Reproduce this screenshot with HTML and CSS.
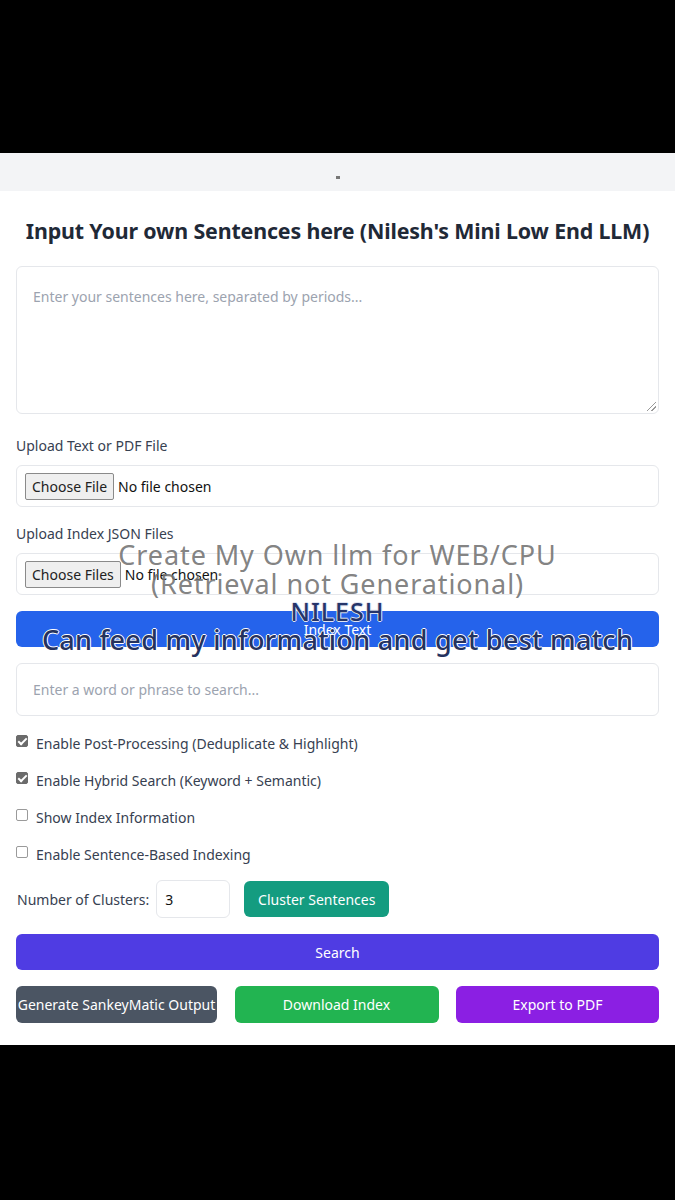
FILE: index.html
```html
<!DOCTYPE html>
<html>
<head>
<meta charset="utf-8">
<link rel="stylesheet" href="styles.css">
</head>
<body>
<div class="screen">
  <div class="topbar"><span class="dot"></span></div>
  <main class="page">
    <h1 class="title">Input Your own Sentences here (Nilesh's Mini Low End LLM)</h1>
    <div class="textarea"><span class="ph">Enter your sentences here, separated by periods...</span><span class="grip"></span></div>

    <label class="label">Upload Text or PDF File</label>
    <div class="filebox"><span class="filebtn">Choose File</span><span class="filetxt">No file chosen</span></div>

    <label class="label">Upload Index JSON Files</label>
    <div class="filebox"><span class="filebtn">Choose Files</span><span class="filetxt">No file chosen</span></div>

    <button class="btn full blue">Index Text</button>

    <div class="input search"><span class="ph">Enter a word or phrase to search...</span></div>

    <div class="checks">
      <label class="check"><span class="box on"></span>Enable Post-Processing (Deduplicate &amp; Highlight)</label>
      <label class="check"><span class="box on"></span>Enable Hybrid Search (Keyword + Semantic)</label>
      <label class="check"><span class="box"></span>Show Index Information</label>
      <label class="check"><span class="box"></span>Enable Sentence-Based Indexing</label>
    </div>

    <div class="clusters">
      <span class="clabel">Number of Clusters:</span>
      <span class="num">3</span>
      <button class="btn teal">Cluster Sentences</button>
    </div>

    <button class="btn full indigo">Search</button>

    <div class="actions">
      <button class="btn gray">Generate SankeyMatic Output</button>
      <button class="btn green">Download Index</button>
      <button class="btn purple">Export to PDF</button>
    </div>
  </main>

  <div class="captions">
    <div class="cap c1">Create My Own llm for WEB/CPU</div>
    <div class="cap c2">(Retrieval not Generational)</div>
    <div class="cap c3">NILESH</div>
    <div class="cap c4">Can feed my information and get best match</div>
  </div>
</div>
</body>
</html>
```

FILE: styles.css
```css
* { box-sizing: border-box; }
html, body { margin: 0; padding: 0; background: #000; }
body { font-family: "Noto Sans", "Open Sans", sans-serif; color: #1f2937; }

.screen { position: relative; width: 675px; height: 1200px; padding-top: 153px; background: #000; }

.topbar { height: 38px; background: #f3f4f6; display: flex; justify-content: center; align-items: center; }
.dot { width: 4px; height: 3px; background: #777; margin-top: 10px; }

.page { background: #fff; height: 854px; padding: 26px 16px 0 16px; display: flex; flex-direction: column; }

.title { margin: 0; text-align: center; font-size: 21.4px; font-weight: 700; line-height: 28px; color: #1f2937; letter-spacing: -0.15px; white-space: nowrap; }

.textarea { position: relative; margin-top: 21px; height: 148px; border: 1px solid #e5e7eb; border-radius: 6px; padding: 18px 16px; }
.ph { font-size: 14px; color: #9ca3af; line-height: 20px; }
.grip { position: absolute; right: 2px; bottom: 2px; width: 9px; height: 9px;
  background: linear-gradient(135deg, transparent 45%, #999 45%, #999 55%, transparent 55%, transparent 70%, #999 70%, #999 80%, transparent 80%); }

.label { display: block; margin-top: 22px; font-size: 14px; line-height: 20px; color: #374151; }
.label + .filebox { margin-top: 9px; }
.filebox + .label { margin-top: 17px; }

.filebox { height: 42px; border: 1px solid #e5e7eb; border-radius: 6px; display: flex; align-items: center; padding-left: 8px; font-size: 14px; color: #111; }
.filebtn { display: inline-flex; align-items: center; height: 27px; padding: 0 6px; border: 1px solid #8a8a8a; border-radius: 2px; background: #efefef; color: #222; margin-right: 4px; }
.filetxt { color: #111; }

.btn { border: 0; border-radius: 6px; color: #fff; font-family: inherit; font-size: 14px; display: flex; align-items: center; justify-content: center; padding: 0; }
.full { width: 100%; height: 36px; margin-top: 16px; }
.blue { background: #2563eb; }
.indigo { background: #4f3ce3; }

.input.search { margin-top: 16px; height: 53px; border: 1px solid #e5e7eb; border-radius: 6px; padding: 0 16px; display: flex; align-items: center; }

.checks { margin-top: 17px; display: flex; flex-direction: column; gap: 17px; }
.check { display: flex; align-items: center; height: 20px; font-size: 14px; color: #374151; }
.box { width: 12px; height: 12px; border: 1px solid #9a9a9a; border-radius: 2px; margin-right: 8px; margin-top: -4px; background: #fff; position: relative; }
.box.on { background: #6b6b6b; border-color: #6b6b6b; }
.box.on::after { content: ""; position: absolute; left: 3px; top: 0px; width: 3px; height: 7px; border: solid #fff; border-width: 0 2px 2px 0; transform: rotate(45deg); }

.clusters { margin-top: 16px; display: flex; align-items: center; height: 38px; }
.clabel { font-size: 14px; color: #374151; margin-left: 1px; margin-right: 7px; }
.num { width: 74px; height: 38px; border: 1px solid #e5e7eb; border-radius: 6px; display: flex; align-items: center; padding-left: 8px; font-size: 14px; color: #111; }
.teal { background: #149c80; height: 36px; width: 145px; margin-left: 14px; }

.actions { margin-top: 16px; display: grid; grid-template-columns: 201px 204px 203px; justify-content: space-between; }
.actions .btn { height: 37px; }
.gray { background: #4b5563; }
.green { background: #22b451; }
.purple { background: #8b1fe3; }

.captions { position: absolute; left: 0; top: 540px; width: 675px; text-align: center; pointer-events: none; }
.cap { font-family: "Noto Sans", sans-serif; line-height: 29px; white-space: nowrap; }
.c1, .c2 { font-size: 27px; color: rgba(115,115,115,0.9); letter-spacing: 0.9px; }
.c3 { font-size: 25px; color: #26356a; letter-spacing: 1px; line-height: 27px; font-weight: 500;
  text-shadow: -1px 0 #dfe3f0, 1px 0 #dfe3f0, 0 -1px #dfe3f0, 0 1px #dfe3f0; }
.c4 { font-size: 27px; color: #25325e; letter-spacing: 0.3px; font-weight: 500;
  text-shadow: -1px 0 #fff, 1px 0 #fff, 0 -1px #fff, 0 1px #fff; }
```
